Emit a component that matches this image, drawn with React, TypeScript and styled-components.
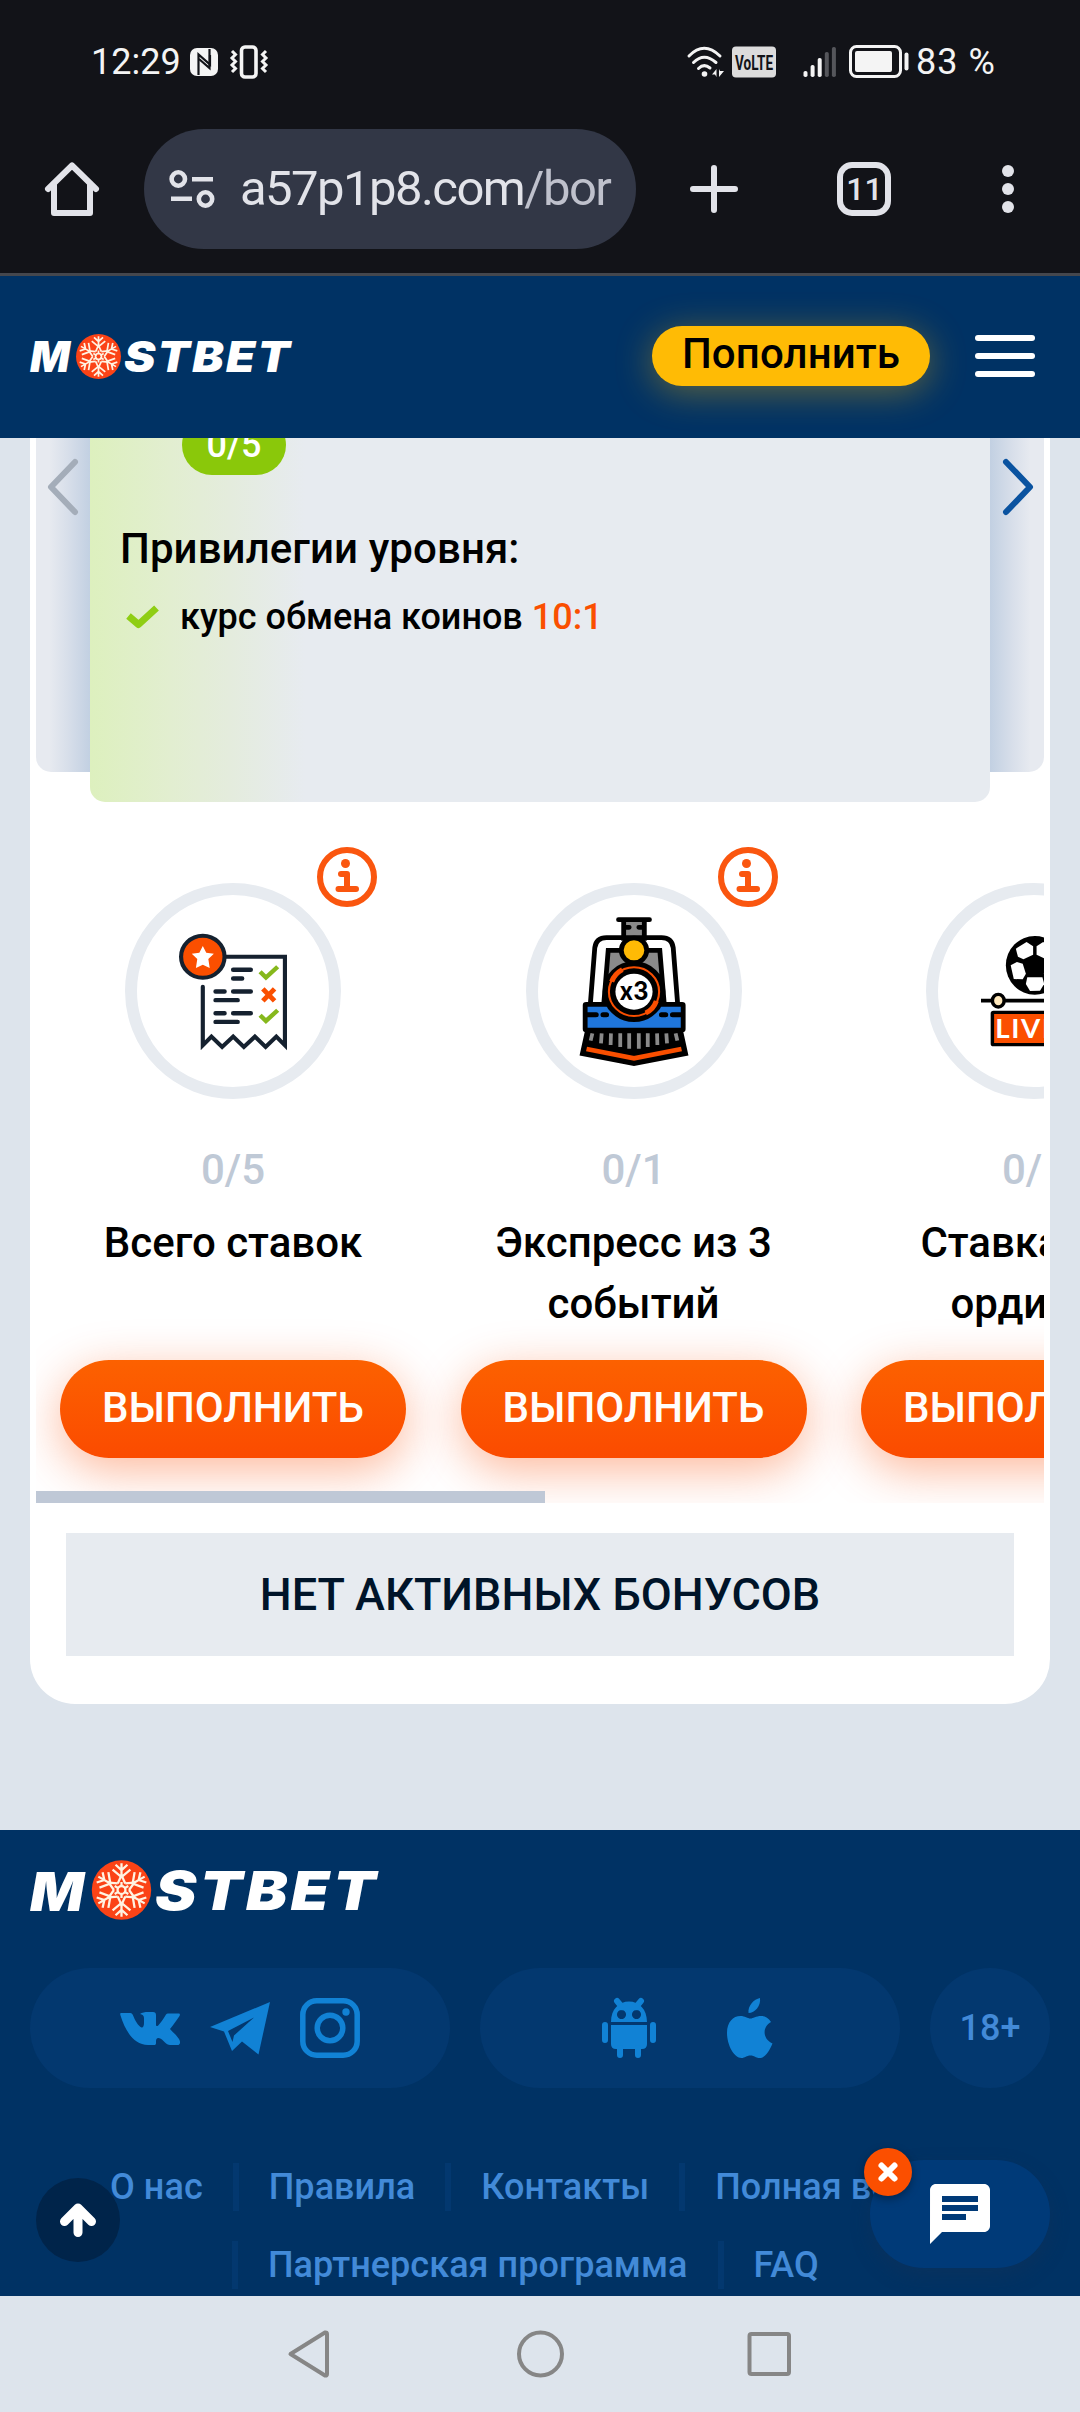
import React from "react";
import styled, { createGlobalStyle } from "styled-components";
import { MdChat } from "react-icons/md";

const Global = createGlobalStyle`
  *, *::before, *::after { box-sizing: border-box; }
  body { margin: 0; background: #dde4ec; }
  button { border: 0; padding: 0; background: none; font: inherit; color: inherit; }
  svg { display: block; flex: none; overflow: visible; }
`;

const Screen = styled.div`
  width: 1080px;
  height: 2412px;
  display: flex;
  flex-direction: column;
  overflow: hidden;
  position: relative;
  background: #dde4ec;
  font-family: Roboto, "Liberation Sans", sans-serif;
  font-weight: 500;
  color: #000;
`;

/* ---------- system status bar ---------- */

const StatusBar = styled.div`
  height: 123px;
  flex: none;
  display: flex;
  justify-content: space-between;
  padding: 0 84px 0 91px;
  background: #121318;
  color: #f4f4f4;
`;

const StatusGroup = styled.div`
  display: flex;
  align-items: center;
  height: 123px;
`;

const StatusText = styled.span<{ $w: number; $spacing: number; $ml?: number }>`
  width: ${(p) => p.$w}px;
  margin-left: ${(p) => p.$ml ?? 0}px;
  font-size: 36px;
  font-weight: 400;
  line-height: 120px;
  letter-spacing: ${(p) => p.$spacing}px;
  white-space: nowrap;
`;

/* ---------- browser toolbar ---------- */

const Toolbar = styled.div`
  height: 153px;
  flex: none;
  display: flex;
  align-items: flex-start;
  padding: 6px 0 0 45px;
  background: #121318;
  border-bottom: 3px solid #45474d;
  color: #e2e3e9;
`;

const ToolButton = styled.button<{ $w: number; $ml?: number }>`
  width: ${(p) => p.$w}px;
  height: 120px;
  margin-left: ${(p) => p.$ml ?? 0}px;
  display: flex;
  align-items: center;
  justify-content: center;
`;

const AddressBar = styled.div`
  width: 492px;
  height: 120px;
  margin-left: 45px;
  border-radius: 60px;
  background: #323746;
  display: flex;
  align-items: center;
  padding-left: 25px;
`;

const Url = styled.span`
  margin-left: 25px;
  font-size: 49px;
  font-weight: 400;
  line-height: 126px;
  letter-spacing: -1.55px;
  white-space: nowrap;
  em { font-style: normal; color: #bfc1cc; }
`;

const TabCount = styled.span`
  width: 54px;
  height: 54px;
  border: 6px solid #e2e3e9;
  border-radius: 15px;
  padding-left: 1px;
  font-size: 32px;
  font-weight: 500;
  line-height: 43px;
  letter-spacing: 0;
  text-align: center;
`;

/* ---------- site header ---------- */

const Header = styled.header`
  height: 162px;
  flex: none;
  display: flex;
  align-items: center;
  padding: 0 45px 0 30px;
  background: #003264;
`;

const DepositButton = styled.button`
  width: 278px;
  height: 60px;
  margin: -2px 45px 0 auto;
  border-radius: 30px;
  background: #ffbb05;
  color: #000;
  font-size: 42px;
  line-height: 55px;
  padding-bottom: 5px;
  letter-spacing: 0.1px;
  box-shadow: 0 6px 36px rgba(255, 187, 5, 0.38);
`;

const Burger = styled.button`
  width: 60px;
  height: 42px;
  margin-top: -2px;
  display: flex;
  flex-direction: column;
  justify-content: space-between;
  i { height: 6px; border-radius: 3px; background: #fff; }
`;

/* ---------- loyalty card ---------- */

const Main = styled.main`
  height: 1392px;
  flex: none;
  padding: 0 30px;
  overflow: hidden;
`;

const Panel = styled.section`
  height: 1266px;
  padding: 0 6px;
  background: #fff;
  border-radius: 0 0 45px 45px;
`;

const LevelSlider = styled.div`
  height: 364px;
  display: flex;
  align-items: flex-start;
`;

const SideCard = styled.div<{ $side: "left" | "right" }>`
  width: 54px;
  height: 334px;
  padding-top: 20px;
  border-radius: ${(p) => (p.$side === "left" ? "0 0 0 15px" : "0 0 15px 0")};
  background: linear-gradient(
    to ${(p) => p.$side},
    #c2d0e2 0%,
    #d8dfea 42%,
    #e7eaf0 75%
  );
`;

const LevelCard = styled.div`
  width: 900px;
  height: 364px;
  padding: 0 30px;
  border-radius: 0 0 15px 15px;
  background: linear-gradient(to right, #ddf0be 0, #e2eed0 80px, #e4ecdd 140px, #e7ebf0 215px);
`;

const LevelBadge = styled.div`
  width: 104px;
  height: 60px;
  margin: -23px 0 0 62px;
  border-radius: 30px;
  background: #8ac80a;
  color: #fff;
  font-size: 36px;
  line-height: 60px;
  text-align: center;
`;

const PerksTitle = styled.h2`
  margin: 44px 0 11px;
  font-size: 42px;
  font-weight: 500;
  line-height: 60px;
  letter-spacing: 0.08px;
`;

const Perk = styled.div`
  display: flex;
  align-items: center;
  gap: 20px;
  padding-left: 6px;
  font-size: 36px;
  line-height: 54px;
  b { font-weight: 500; color: #fa4f00; }
`;

const Tasks = styled.div`
  position: relative;
  height: 701px;
  padding: 81px 0 0 24px;
  display: grid;
  grid-template-columns: repeat(3, 346px);
  column-gap: 54.5px;
  align-content: start;
  overflow: hidden;
`;

const Task = styled.article`
  display: flex;
  flex-direction: column;
  align-items: center;
`;

const Ring = styled.div`
  position: relative;
  width: 216px;
  height: 216px;
  border: 12px solid #e7ebf0;
  border-radius: 50%;
  display: flex;
  align-items: center;
  justify-content: center;
`;

const InfoBadge = styled.button`
  position: absolute;
  left: 180px;
  top: -48px;
  width: 60px;
  height: 60px;
`;

const Count = styled.div`
  margin-top: 41px;
  font-size: 42px;
  line-height: 60px;
  color: #bfc9d6;
`;

const TaskTitle = styled.h3`
  width: 300px;
  height: 122px;
  margin: 12px 0 26px;
  font-size: 42px;
  font-weight: 500;
  line-height: 61px;
  text-align: center;
`;

const TaskButton = styled.button`
  width: 346px;
  height: 98px;
  padding-bottom: 3px;
  border-radius: 49px;
  background: linear-gradient(#fc6100, #fb4b00);
  color: #fffdfa;
  font-size: 42px;
  text-transform: uppercase;
  box-shadow: 0 12px 48px rgba(251, 76, 0, 0.4);
`;

const ScrollThumb = styled.div`
  position: absolute;
  left: 0;
  bottom: 0;
  width: 509px;
  height: 12px;
  background: #bfc8d6;
`;

const EmptyBonus = styled.div`
  margin: 30px 30px 0;
  height: 123px;
  background: #e7ebf0;
  color: #001429;
  font-size: 45px;
  line-height: 123px;
  text-align: center;
`;

/* ---------- footer ---------- */

const Footer = styled.footer`
  height: 466px;
  flex: none;
  padding: 30px 30px 0;
  overflow: hidden;
  background: #003264;
  color: #428ad8;
`;

const Pills = styled.div`
  display: flex;
  gap: 30px;
  margin: 48px 0 75px;
`;

const Pill = styled.div<{ $w: number; $gap: number; $pr?: number }>`
  width: ${(p) => p.$w}px;
  height: 120px;
  padding-right: ${(p) => p.$pr ?? 0}px;
  border-radius: 60px;
  background: #03386f;
  color: #1182d5;
  display: flex;
  align-items: center;
  justify-content: center;
  gap: ${(p) => p.$gap}px;
`;

const Age = styled.span`
  color: #428ad8;
  font-size: 36px;
  line-height: 120px;
`;

const LinkRow = styled.nav<{ $indent: number }>`
  display: flex;
  height: 48px;
  margin: 0 -30px 30px ${(p) => p.$indent}px;
  font-size: 36px;
  line-height: 48px;
  letter-spacing: 0.05px;
  white-space: nowrap;
`;

const FooterLink = styled.a<{ $first?: boolean; $last?: boolean }>`
  padding: 0 30px;
  border-right: ${(p) => (p.$last ? 0 : 6)}px solid #03386f;
  border-left: ${(p) => (p.$first ? 6 : 0)}px solid #03386f;
`;

const UpButton = styled.button`
  position: absolute;
  left: 36px;
  top: 2178px;
  width: 84px;
  height: 84px;
  border-radius: 50%;
  background: #00244a;
  display: flex;
  align-items: center;
  justify-content: center;
`;

const ChatButton = styled.button`
  position: absolute;
  left: 870px;
  top: 2160px;
  width: 180px;
  height: 108px;
  border-radius: 54px;
  background: #003a78;
  color: #fff;
  display: flex;
  align-items: center;
  justify-content: center;
  box-shadow: 0 8px 20px rgba(30, 50, 80, 0.3);
`;

const ChatClose = styled.span`
  position: absolute;
  left: -6px;
  top: -12px;
  width: 48px;
  height: 48px;
  border-radius: 50%;
  background: #fb4f00;
  display: flex;
  align-items: center;
  justify-content: center;
  box-shadow: 0 3px 8px rgba(0, 0, 0, 0.35);
`;

const NavBar = styled.div`
  height: 116px;
  flex: none;
  display: flex;
  align-items: center;
  justify-content: space-between;
  padding: 0 287px 0 287px;
  background: #dde4ec;
`;

/* ---------- drawings ---------- */

const Spaced = styled.span<{ $ml: number }>`
  margin-left: ${(p) => p.$ml}px;
`;

function NfcIcon() {
  return (
    <Spaced $ml={10}>
      <svg width="30" height="30" viewBox="0 0 30 30">
        <rect x="1" y="1" width="28" height="28" rx="7" fill="#f4f4f4" />
        <path d="M9.5 28V7.5L21 17.5V8" fill="none" stroke="#121318" strokeWidth="2.2" />
        <path d="M20.5 2V21L10 12" fill="none" stroke="#121318" strokeWidth="2.2" />
      </svg>
    </Spaced>
  );
}

function VibrateIcon() {
  return (
    <Spaced $ml={11}>
      <svg width="38" height="34" viewBox="0 0 38 34" fill="none" stroke="#f4f4f4">
        <rect x="11.5" y="2" width="14.5" height="30" rx="3.5" strokeWidth="3.6" />
        <path d="M2 6l3.5 3.5L2 13l3.5 3.5L2 20l3.5 3.5L2 27" strokeWidth="3" />
        <path d="M36 6l-3.5 3.5L36 13l-3.5 3.5L36 20l-3.5 3.5L36 27" strokeWidth="3" />
      </svg>
    </Spaced>
  );
}

function WifiIcon() {
  return (
    <svg width="38" height="32" viewBox="0 0 38 32" fill="none" stroke="#f4f4f4" strokeWidth="3" strokeLinecap="round">
      <path d="M2 10Q17 -5.5 33 10M6.500 16.500Q17 6 29 16.500M11.500 22.500Q17 17 23 22" />
      <circle cx="17.5" cy="28" r="2.8" fill="#f4f4f4" stroke="none" />
      <path d="M29.500 31V23l-4.500 5.500h3zM32 23v8l5-6h-4z" fill="#f4f4f4" stroke="none" />
    </svg>
  );
}

function VolteIcon() {
  return (
    <Spaced $ml={7}>
      <svg width="44" height="32" viewBox="0 0 44 32">
        <rect y="0.5" width="44" height="31" rx="4" fill="#dcdcdc" />
        <text x="3" y="23.5" fontFamily="Roboto" fontWeight="700" fontSize="21" fill="#121318" textLength="38" lengthAdjust="spacingAndGlyphs">
          VoLTE
        </text>
      </svg>
    </Spaced>
  );
}

function SignalIcon() {
  const bars = [6, 12, 19, 25, 30];
  return (
    <Spaced $ml={27}>
      <svg width="34" height="31" viewBox="0 0 34 31">
        {bars.map((h, i) => (
          <rect key={h} x={0.5 + i * 7.1} y={31 - h} width="4" height={h} rx="1.8" fill={i < 3 ? "#f4f4f4" : "#55565b"} />
        ))}
      </svg>
    </Spaced>
  );
}

function BatteryIcon() {
  return (
    <Spaced $ml={12}>
      <svg width="61" height="33" viewBox="0 0 61 33">
        <rect x="1.5" y="1.5" width="50" height="30" rx="6" fill="none" stroke="#f4f4f4" strokeWidth="3" />
        <rect x="6" y="6" width="37" height="21" rx="2" fill="#f4f4f4" />
        <rect x="55.5" y="7.5" width="4" height="18" rx="2" fill="#f4f4f4" />
      </svg>
    </Spaced>
  );
}

function HomeIcon() {
  return (
    <svg width="54" height="54" viewBox="0 0 54 54" fill="none" stroke="#e2e3e9" strokeWidth="6" strokeLinejoin="round" strokeLinecap="round">
      <path d="M3 27L27 3.5L51 27" />
      <path d="M9 22V51H45V22" />
    </svg>
  );
}

function TuneIcon() {
  return (
    <svg width="46" height="38" viewBox="0 0 46 38" fill="none" stroke="#e2e3e9" strokeWidth="4.6">
      <circle cx="9.3" cy="9" r="6.7" />
      <circle cx="36.5" cy="29" r="6.7" />
      <path d="M23 9.300H44M2 28.700H23" />
    </svg>
  );
}

function PlusIcon() {
  return (
    <svg width="48" height="48" viewBox="0 0 48 48" stroke="#e2e3e9" strokeWidth="6" strokeLinecap="round">
      <path d="M24 3V45M3 24H45" />
    </svg>
  );
}

function DotsIcon() {
  return (
    <svg width="12" height="48" viewBox="0 0 12 48" fill="#e2e3e9">
      <circle cx="6" cy="6" r="6" />
      <circle cx="6" cy="24" r="6" />
      <circle cx="6" cy="42" r="6" />
    </svg>
  );
}

function Snowflake({ cx, cy, r }: { cx: number; cy: number; r: number }) {
  return (
    <g transform={`translate(${cx} ${cy}) scale(${r / 30})`}>
      <circle r="30" fill="#fb4316" />
      <g fill="none" stroke="#fff3e2" strokeWidth="2.3">
        {[0, 60, 120, 180, 240, 300].map((a) => (
          <g key={a} transform={`rotate(${a})`}>
            <path d="M0 -13V-27M-9 -20.500L0 -13L9 -20.500M-6 -25.500L0 -20L6 -25.500" />
            <path d="M-3.800 -6.600L0 -15L3.800 -6.600M0 -3V-8" />
          </g>
        ))}
        <circle r="4" />
      </g>
    </g>
  );
}

function HeaderLogo() {
  return (
    <svg width="262" height="46" viewBox="0 0 262 46" fill="#fff" fontFamily="Inter" fontWeight="900" fontStyle="italic" fontSize="42">
      <text x="0" y="38" textLength="40" lengthAdjust="spacingAndGlyphs">M</text>
      <Snowflake cx={68.5} cy={22.5} r={22.5} />
      <text x="94" y="37.5" textLength="168" lengthAdjust="spacingAndGlyphs" letterSpacing="2">STBET</text>
    </svg>
  );
}

function FooterLogo() {
  return (
    <svg width="352" height="60" viewBox="0 0 352 60" fill="#fff" fontFamily="Inter" fontWeight="900" fontStyle="italic" fontSize="54">
      <text x="0" y="51" textLength="54" lengthAdjust="spacingAndGlyphs">M</text>
      <Snowflake cx={91.5} cy={30} r={29.7} />
      <text x="125" y="50" textLength="224" lengthAdjust="spacingAndGlyphs" letterSpacing="3">STBET</text>
    </svg>
  );
}

const ChevronSvg = styled.svg`
  margin-left: 11px;
`;

function Chevron({ dir }: { dir: "left" | "right" }) {
  const left = dir === "left";
  return (
    <ChevronSvg
      width="32"
      height="58"
      viewBox="0 0 32 58"
      fill="none"
      stroke={left ? "#a4adb9" : "#0a53a0"}
      strokeWidth="6"
      strokeLinecap="round"
      strokeLinejoin="round"
    >
      <path d={left ? "M28 4L4 29L28 54" : "M5 4L29 29L5 54"} />
    </ChevronSvg>
  );
}

function CheckIcon() {
  return (
    <svg width="34" height="26" viewBox="0 0 34 26" fill="none" stroke="#8fce14" strokeWidth="7">
      <path d="M2.500 12L12.500 20.500L30.500 4" strokeLinejoin="round" />
    </svg>
  );
}

function InfoIcon() {
  return (
    <svg width="60" height="60" viewBox="0 0 60 60" fill="none" stroke="#fa560f" strokeLinecap="round" strokeLinejoin="round">
      <circle cx="30" cy="30" r="27" strokeWidth="6" />
      <circle cx="28.5" cy="16.5" r="4.5" fill="#fa560f" stroke="none" />
      <path d="M24 27H30V42M21.500 42H39" strokeWidth="6" />
    </svg>
  );
}

function ReceiptIcon() {
  return (
    <svg width="108" height="117" viewBox="520 819 313 350" preserveAspectRatio="none" fill="none">
      <path d="M645 890H827V1155L802 1129L771 1160L740 1129L708 1160L677 1129L645 1160L614 1129L589 1155V980" fill="#fff" stroke="#15212f" strokeWidth="12" strokeLinecap="round" />
      <circle cx="589" cy="890" r="63" fill="#fb4f00" stroke="#15212f" strokeWidth="12" />
      <path d="M589 858l10 20 22 3-16 16 4 27-20-10-20 10 4-27-16-16 22-3z" fill="#fff" />
      <path d="M677 929H728M677 955H703M626 994H652M677 994H728M626 1020H690M626 1059H652M677 1059H728M626 1085H690" stroke="#15212f" strokeWidth="13" strokeLinecap="round" />
      <path d="M755 935L772 952L806 920M755 1065L772 1082L806 1050" stroke="#86b81c" strokeWidth="13" />
      <path d="M763 986L797 1022M797 986L763 1022" stroke="#fa4f00" strokeWidth="14" />
    </svg>
  );
}

function TrainIcon() {
  return (
    <svg width="108" height="149" viewBox="113 768 314 447" preserveAspectRatio="none" fill="none" stroke="#000" strokeWidth="14">
      <path d="M240 776V832H300V776" fill="#8a8a8a" />
      <path d="M225 776H315M244 799H256M284 799H296" strokeLinecap="round" />
      <path d="M143 1030L156 860Q160 830 190 830H350Q380 830 384 860L397 1030" />
      <path d="M182 1030L195 868H345L358 1030" fill="#8a8a8a" />
      <path d="M182 1030L195 940H345L358 1030Z" fill="#000" stroke="none" />
      <rect x="128" y="1030" width="285" height="77" rx="3" fill="#1f76dc" />
      <path d="M135 1061H160M180 1061H190M350 1061H362M382 1061H405" strokeWidth="15" strokeLinecap="round" />
      <circle cx="270" cy="992" r="83" fill="#000" stroke="#000" strokeWidth="16" />
      <circle cx="270" cy="992" r="73" stroke="#fa4f00" strokeWidth="6" />
      <circle cx="270" cy="992" r="54" fill="#fff" stroke="none" />
      <path d="M205 962Q214 938 236 926M335 1020Q326 1046 304 1056" stroke="#fa4f00" strokeWidth="15" />
      <circle cx="270" cy="868" r="37" fill="#ffba05" />
      <path d="M134 1112L120 1178L270 1208L420 1178L406 1112Z" fill="#000" />
      <path d="M149 1117L144 1139M176 1117L174 1147M203 1117L202 1152M230 1117V1158M256 1117V1163M284 1117V1163M310 1117V1158M337 1117L338 1152M364 1117L366 1147M391 1117L396 1139" stroke="#8a8a8a" strokeWidth="11" />
      <path d="M132 1164L270 1192L408 1164" stroke="#fa4f00" strokeWidth="14" />
      <text x="270" y="1018" textAnchor="middle" fontFamily="Inter" fontWeight="700" fontSize="76" textLength="84" lengthAdjust="spacingAndGlyphs" fill="#000" stroke="none">
        x3
      </text>
    </svg>
  );
}

function LiveIcon() {
  return (
    <svg width="107" height="110" viewBox="1278 828 310 330" preserveAspectRatio="none" fill="none">
      <ellipse cx="1434" cy="916" rx="84" ry="88" fill="#000" />
      <g fill="#fff">
        <path d="M1410 846L1429 859V884L1401 898L1385 890L1379 866Z" />
        <path d="M1458 846L1439 859V884L1467 898L1483 890L1489 866Z" />
        <path d="M1364 916L1382 906L1399 911L1408 941L1399 958L1373 957Z" />
        <path d="M1504 916L1486 906L1469 911L1460 941L1469 958L1495 957Z" />
        <path d="M1412 952H1456L1461 972L1449 992L1420 993L1408 972Z" />
      </g>
      <path d="M1278 1022H1588" stroke="#000" strokeWidth="11" />
      <ellipse cx="1328" cy="1022" rx="17" ry="19" fill="#ffe9bd" stroke="#000" strokeWidth="10" />
      <rect x="1311" y="1057" width="245" height="97" rx="3" fill="#fb4f00" stroke="#000" strokeWidth="10" />
      <text x="1319" y="1134" fontFamily="Lato" fontWeight="700" fontSize="80" fill="#fff" letterSpacing="5">
        LIVE
      </text>
    </svg>
  );
}

function VkIcon() {
  return (
    <svg width="60" height="33" viewBox="0 0 60 33" fill="currentColor">
      <path d="M1.500 1H10.500Q12 1 12.600 2.500C15 8 18 14 21.500 15.500C23 16 24 14 24 11V6C24 3.500 22.500 2.500 20 2C22 .5 25 0 28 0H33C35 0 36 1 36 3V12.500C36 14.500 37.500 14.500 39 12.500C42 9 44 6 46 2.500Q46.700 1.500 48 1.500H58.500C60 1.500 60.300 2.800 59.500 4C57 8 53.500 12.500 50 17C52.500 20 56 22.500 59 27C61 30 60 33 57.500 33H50C48 33 46.500 32 45 30.500C43 28.500 41 26 38.500 26C36.500 26 36 27.500 36 29.500V31C36 32.500 35.500 33 34 33H28C15 33 6 21 .5 3.500C0 2 0 1 1.500 1Z" />
    </svg>
  );
}

function TelegramIcon() {
  return (
    <svg width="60" height="53" viewBox="0 0 60 53" fill="currentColor">
      <path fillRule="evenodd" d="M0 25L60 0L48.500 52.500L32 39.500L22 49L14 29.500ZM44 15.500L18 29L22.500 40L24 33.500Z" />
    </svg>
  );
}

function InstagramIcon() {
  return (
    <svg width="60" height="60" viewBox="0 0 60 60" fill="none" stroke="currentColor" strokeWidth="5.5">
      <rect x="2.8" y="2.8" width="54.4" height="54.4" rx="14" />
      <circle cx="30" cy="30" r="12.8" />
      <circle cx="46" cy="14" r="3.7" fill="currentColor" stroke="none" />
    </svg>
  );
}

function AndroidIcon() {
  return (
    <svg width="54" height="60" viewBox="0 0 54 60" fill="currentColor">
      <path d="M15 3L20 9M39 3L34 9" stroke="currentColor" strokeWidth="6" strokeLinecap="round" />
      <path fillRule="evenodd" d="M9 24C9 11 17 3.500 27 3.500S45 11 45 24ZM19.500 12a4.500 4.500 0 1 0 .01 0ZM34.500 12a4.500 4.500 0 1 0 .01 0Z" />
      <path d="M9 27H45V46Q45 51 40 51H14Q9 51 9 46Z" />
      <path d="M3 27V42M51 27V42M18 50V57M36 50V57" stroke="currentColor" strokeWidth="6" strokeLinecap="round" />
    </svg>
  );
}

function AppleIcon() {
  return (
    <svg width="46" height="60" viewBox="0 0 46 60" fill="currentColor">
      <path d="M33 0C34 8 28 15 21.500 15C20.500 8 27 1 33 0Z" />
      <path d="M44 24C35 29 35.500 41 45.500 45.500C42.500 53 38 60 32.500 60C28.500 60 27.500 57.500 23.500 57.500S18 60 14.500 60C7 60 0 47 0 35C0 24 6 18 13.500 18C18 18 20.500 20.500 23.500 20.500C26 20.500 29 18 34 18C38 18 41.500 20 44 24Z" />
    </svg>
  );
}

/* ---------- data ---------- */

const tasks = [
  { count: "0/5", title: "Всего ставок", icon: <ReceiptIcon /> },
  { count: "0/1", title: "Экспресс из 3 событий", icon: <TrainIcon /> },
  { count: "0/1", title: "Ставка Live ординар", icon: <LiveIcon /> },
];

export default function App() {
  return (
    <Screen>
      <Global />
      <StatusBar>
        <StatusGroup>
          <StatusText $w={88} $spacing={0}>12:29</StatusText>
          <NfcIcon />
          <VibrateIcon />
        </StatusGroup>
        <StatusGroup>
          <WifiIcon />
          <VolteIcon />
          <SignalIcon />
          <BatteryIcon />
          <StatusText $w={80} $spacing={1} $ml={6}>83 %</StatusText>
        </StatusGroup>
      </StatusBar>

      <Toolbar>
        <ToolButton $w={54}><HomeIcon /></ToolButton>
        <AddressBar>
          <TuneIcon />
          <Url>a57p1p8.com<em>/bor</em></Url>
        </AddressBar>
        <ToolButton $w={48} $ml={54}><PlusIcon /></ToolButton>
        <ToolButton $w={54} $ml={99}><TabCount>11</TabCount></ToolButton>
        <ToolButton $w={12} $ml={111}><DotsIcon /></ToolButton>
      </Toolbar>

      <Header>
        <HeaderLogo />
        <DepositButton>Пополнить</DepositButton>
        <Burger><i /><i /><i /></Burger>
      </Header>

      <Main>
        <Panel>
          <LevelSlider>
            <SideCard $side="left"><Chevron dir="left" /></SideCard>
            <LevelCard>
              <LevelBadge>0/5</LevelBadge>
              <PerksTitle>Привилегии уровня:</PerksTitle>
              <Perk>
                <CheckIcon />
                <span>курс обмена коинов <b>10:1</b></span>
              </Perk>
            </LevelCard>
            <SideCard $side="right"><Chevron dir="right" /></SideCard>
          </LevelSlider>

          <Tasks>
            {tasks.map((t) => (
              <Task key={t.title}>
                <Ring>
                  {t.icon}
                  <InfoBadge><InfoIcon /></InfoBadge>
                </Ring>
                <Count>{t.count}</Count>
                <TaskTitle>{t.title}</TaskTitle>
                <TaskButton>Выполнить</TaskButton>
              </Task>
            ))}
            <ScrollThumb />
          </Tasks>

          <EmptyBonus>НЕТ АКТИВНЫХ БОНУСОВ</EmptyBonus>
        </Panel>
      </Main>

      <Footer>
        <FooterLogo />
        <Pills>
          <Pill $w={420} $gap={30}><VkIcon /><TelegramIcon /><InstagramIcon /></Pill>
          <Pill $w={420} $gap={71} $pr={5}><AndroidIcon /><AppleIcon /></Pill>
          <Pill $w={120} $gap={0}><Age>18+</Age></Pill>
        </Pills>
        <LinkRow $indent={50}>
          <FooterLink>О нас</FooterLink>
          <FooterLink>Правила</FooterLink>
          <FooterLink>Контакты</FooterLink>
          <FooterLink $last>Полная версия</FooterLink>
        </LinkRow>
        <LinkRow $indent={202}>
          <FooterLink $first>Партнерская программа</FooterLink>
          <FooterLink $last>FAQ</FooterLink>
        </LinkRow>
      </Footer>

      <NavBar>
        <svg width="45" height="52" viewBox="0 0 45 52" fill="none" stroke="#868686" strokeWidth="4" strokeLinejoin="round">
          <path d="M3.500 26L38 4.500Q40 4 40 6V46Q40 48 38 47.500Z" />
        </svg>
        <svg width="48" height="48" viewBox="0 0 48 48" fill="none" stroke="#868686" strokeWidth="4">
          <circle cx="24.5" cy="24" r="21.5" />
        </svg>
        <svg width="46" height="46" viewBox="0 0 46 46" fill="none" stroke="#868686" strokeWidth="4">
          <rect x="2.5" y="3" width="39.5" height="40" rx="2" />
        </svg>
      </NavBar>

      <UpButton>
        <svg width="36" height="34" viewBox="0 0 36 34" fill="none" stroke="#fff" strokeWidth="9" strokeLinecap="round" strokeLinejoin="round">
          <path d="M4.500 18.500L18 5L31.500 18.500M18 8V29.500" />
        </svg>
      </UpButton>

      <ChatButton>
        <MdChat size={72} />
        <ChatClose>
          <svg width="20" height="20" viewBox="0 0 20 20" stroke="#fff" strokeWidth="6" strokeLinecap="round">
            <path d="M3.500 3.500L16.500 16.500M16.500 3.500L3.500 16.500" />
          </svg>
        </ChatClose>
      </ChatButton>
    </Screen>
  );
}
